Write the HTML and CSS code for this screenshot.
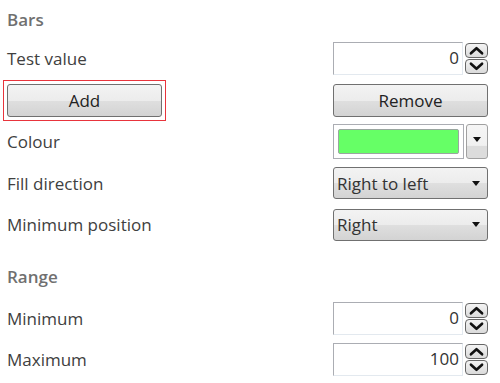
FILE: index.html
```html
<!DOCTYPE html>
<html lang="en">
<head>
  <meta charset="UTF-8" />
  <title>Bars</title>
  <link rel="stylesheet" href="styles.css">
</head>
<body>
  <div class="panel">

    <div class="heading">Bars</div>

    <div class="row">
      <div class="label">Test value</div>
      <div class="spin">
        <div class="spin-box">0</div>
        <div class="spin-buttons">
          <div class="spin-btn"><svg viewBox="0 0 22 14"><path d="M5 10 L11 4.5 L17 10" /></svg></div>
          <div class="spin-btn"><svg viewBox="0 0 22 14"><path d="M5 4 L11 9.5 L17 4" /></svg></div>
        </div>
      </div>
    </div>

    <div class="row">
      <div class="focus-ring"><button class="btn">Add</button></div>
      <button class="btn">Remove</button>
    </div>

    <div class="row">
      <div class="label">Colour</div>
      <div class="colour">
        <div class="colour-box"><div class="swatch"></div></div>
        <div class="colour-drop"><span class="arrow"></span></div>
      </div>
    </div>

    <div class="row">
      <div class="label">Fill direction</div>
      <div class="select">Right to left <span class="arrow"></span></div>
    </div>

    <div class="row">
      <div class="label">Minimum position</div>
      <div class="select">Right <span class="arrow"></span></div>
    </div>

    <div class="heading range">Range</div>

    <div class="row">
      <div class="label">Minimum</div>
      <div class="spin">
        <div class="spin-box">0</div>
        <div class="spin-buttons">
          <div class="spin-btn"><svg viewBox="0 0 22 14"><path d="M5 10 L11 4.5 L17 10" /></svg></div>
          <div class="spin-btn"><svg viewBox="0 0 22 14"><path d="M5 4 L11 9.5 L17 4" /></svg></div>
        </div>
      </div>
    </div>

    <div class="row">
      <div class="label">Maximum</div>
      <div class="spin">
        <div class="spin-box">100</div>
        <div class="spin-buttons">
          <div class="spin-btn"><svg viewBox="0 0 22 14"><path d="M5 10 L11 4.5 L17 10" /></svg></div>
          <div class="spin-btn"><svg viewBox="0 0 22 14"><path d="M5 4 L11 9.5 L17 4" /></svg></div>
        </div>
      </div>
    </div>

  </div>
</body>
</html>
```

FILE: styles.css
```css
:root {
  --text: #404040;
  --heading: #707070;
  --border: #707070;
  --field: #abadb3;
}

* {
  box-sizing: border-box;
}

body {
  margin: 0;
  background: #fff;
  color: var(--text);
  font-family: 'Open Sans', 'Noto Sans', sans-serif;
  font-size: 17px;
}

.panel {
  display: flex;
  flex-direction: column;
  padding: 0 12px 0 7px;
}

.heading {
  height: 38px;
  display: flex;
  align-items: center;
  font-weight: 600;
  color: var(--heading);
}

.heading.range {
  margin-top: 10px;
  height: 42px;
}

.row {
  height: 41.5px;
  display: flex;
  align-items: center;
  justify-content: space-between;
}

/* spin box */
.spin {
  width: 155px;
  height: 33px;
  display: flex;
  align-items: center;
}

.spin-box {
  flex: 1;
  height: 33px;
  border: 1px solid var(--field);
  border-right-color: #e3e9ef;
  border-bottom-color: #e3e9ef;
  text-align: right;
  padding: 3px 3px 0 0;
  color: #333;
}

.spin-buttons {
  width: 23px;
  margin-left: 2px;
  display: flex;
  flex-direction: column;
  gap: 1px;
}

.spin-btn {
  height: 15px;
  border: 1px solid #666;
  border-radius: 4px;
  background: linear-gradient(#f4f4f4, #dadada);
  display: flex;
}

.spin-btn svg {
  width: 100%;
  height: 100%;
}

.spin-btn path {
  fill: none;
  stroke: #111;
  stroke-width: 2.8;
  stroke-linecap: round;
  stroke-linejoin: round;
}

/* buttons */
.btn {
  width: 155px;
  height: 33px;
  font: inherit;
  color: #222;
  border: 1px solid var(--border);
  border-radius: 3px;
  background: linear-gradient(#f3f3f3 0%, #ececec 50%, #dfdfdf 51%, #d3d3d3 100%);
  padding: 0;
}

.focus-ring {
  margin-left: -4px;
  padding: 3px;
  border: 1px solid #e8343c;
  display: flex;
}

/* colour picker */
.colour {
  width: 155px;
  height: 35px;
  display: flex;
  gap: 2px;
}

.colour-box {
  flex: 1;
  border: 1px solid var(--field);
  padding: 4px;
}

.swatch {
  height: 100%;
  background: #66ff66;
  border: 1px solid #9aa6a0;
  border-radius: 2px;
}

.colour-drop {
  width: 22px;
  border: 1px solid #a0a0a0;
  border-radius: 3px;
  background: linear-gradient(#f6f6f6 0%, #f0f0f0 62%, #dcdcdc 63%, #dcdcdc 100%);
  display: flex;
  align-items: center;
  justify-content: center;
  padding-bottom: 4px;
}

/* selects */
.select {
  width: 155px;
  height: 32px;
  border: 1px solid var(--border);
  border-radius: 3px;
  background: linear-gradient(#f3f3f3 0%, #ececec 50%, #dfdfdf 51%, #d3d3d3 100%);
  display: flex;
  align-items: center;
  justify-content: space-between;
  padding: 0 7px 0 3px;
  color: #333;
}

.arrow {
  width: 0;
  height: 0;
  border-left: 4px solid transparent;
  border-right: 4px solid transparent;
  border-top: 5px solid #111;
}
```
